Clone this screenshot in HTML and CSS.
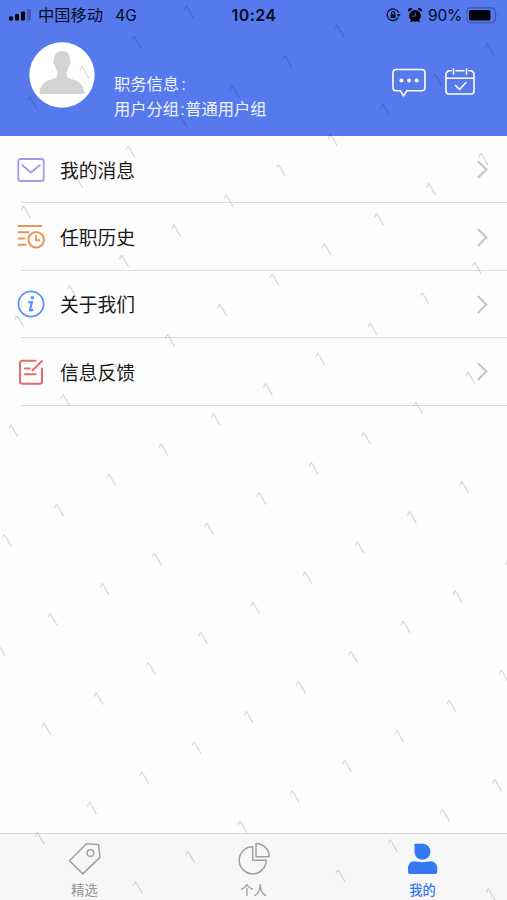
FILE: index.html
```html
<!DOCTYPE html>
<html lang="zh-CN">
<head>
<meta charset="utf-8">
<meta name="viewport" content="width=device-width">
<title>我的</title>
<link rel="stylesheet" href="styles.css">
</head>
<body>
<div class="app">
  <header class="header">
    <div class="status">
      <div class="status-left">
        <svg class="signal" width="22" height="14" viewBox="0 0 22 14"><rect x="0" y="8.5" width="4" height="4" rx="1"/><rect x="6" y="6" width="4" height="6.500" rx="1"/><rect x="12" y="3.500" width="4" height="9" rx="1"/><rect x="18.200" y="1" width="3.600" height="11.500" rx="1" opacity=".25"/></svg>
        <span class="carrier">中国移动</span><span class="network">4G</span>
      </div>
      <div class="clock">10:24</div>
      <div class="status-right">
        <svg width="15" height="14" viewBox="0 0 15 14" fill="none" stroke="#050b1e" stroke-width="1.200"><path d="M12.200 9.500A5.900 5.900 0 1 1 12.600 5"/><path d="M10.800 6h3.900l-1.900 3z" fill="#050b1e" stroke="none"/><rect x="4.600" y="6.300" width="5" height="3.900" rx=".5" fill="#050b1e" stroke="none"/><path d="M5.600 6.500V5a1.500 1.500 0 0 1 3 0v1.500"/></svg>
        <svg class="alarm" width="14" height="15" viewBox="0 0 14 15"><circle cx="7" cy="7.800" r="5.900"/><path d="M.6 3.800A2.300 2.300 0 0 1 4.500 1zM13.400 3.800A2.300 2.300 0 0 0 9.500 1zM2 14l2-3 1.500 1.300L3.500 14zM12 14l-2-3-1.500 1.300 2 1.700z"/><path d="M7.200 4.500v3.700H4.300" fill="none" stroke="#567aed" stroke-width=".9"/></svg>
        <span class="percent">90%</span>
        <svg class="battery" width="33" height="17" viewBox="0 0 33 17"><rect x=".8" y=".8" width="28.600" height="15" rx="4" fill="none" stroke="#3d58b4" stroke-width="1.200"/><rect x="3" y="3" width="21.500" height="10.600" rx="1.800" fill="#02040b"/><path d="M31 6q1.600 2.300 0 4.600z" fill="#3d58b4"/></svg>
      </div>
    </div>
    <div class="profile">
      <svg class="avatar" width="66" height="66" viewBox="0 0 66 66"><circle cx="33" cy="33" r="32.700" fill="#fff"/><path d="M33 9c5.500 0 8.300 3.300 8.100 9.500 1.200.4.700 3.600-.8 4.600-.6 3.500-2 5.500-2.800 6.800-.4 4.500 1.500 6 6.500 7.700 7.500 2.500 11 6 11.400 14.400H10.600C11 43.600 14.500 40.100 22 37.600c5-1.700 6.900-3.200 6.500-7.700-.8-1.300-2.200-3.300-2.800-6.800-1.500-1-2-4.200-.8-4.600C24.700 12.300 27.500 9 33 9z" fill="#d3d3d3"/></svg>
      <div class="info"><div>职务信息<span class="colon">:</span></div><div>用户分组<span class="colon tight">:</span>普通用户组</div></div>
      <div class="actions">
        <svg width="34" height="30" viewBox="0 0 34 30" fill="none" stroke="#fff" stroke-width="1.600" stroke-linejoin="round"><path d="M4 1.500h26a3 3 0 0 1 3 3v15.300a3 3 0 0 1-3 3H15l-3.500 5-3-5H4a3 3 0 0 1-3-3V4.500a3 3 0 0 1 3-3z"/><g fill="#fff" stroke="none"><circle cx="9.400" cy="12.500" r="2"/><circle cx="17" cy="12.500" r="2"/><circle cx="24.600" cy="12.500" r="2"/></g></svg>
        <svg width="30" height="30" viewBox="0 0 30 30" fill="none" stroke="#fff" stroke-width="1.600" stroke-linecap="round" stroke-linejoin="round"><path d="M6 2.800H4.500a3.500 3.500 0 0 0-3.500 3.500V23a3 3 0 0 0 3 3h22a3 3 0 0 0 3-3V6.300a3.500 3.500 0 0 0-3.500-3.500H24M11 2.800h8M1 10.300h28M8.500 1v5M21.500 1v5M10.500 17.500l4 4 6.500-7"/></svg>
      </div>
    </div>
  </header>

  <nav class="menu">
    <a class="row"><svg class="icon" viewBox="0 0 28 28" fill="none" stroke="#a796f1" stroke-width="1.800" stroke-linecap="round" stroke-linejoin="round"><rect x="1.300" y="3" width="25.400" height="22" rx="2"/><path d="M5.300 9.300l8.700 7.200 8.700-7.200"/></svg><span>我的消息</span><i class="arrow"></i></a>
    <a class="row"><svg class="icon" viewBox="0 0 28 28" fill="none" stroke="#e99554" stroke-width="2"><path d="M.8 3H25M.8 9.200h11.500M.8 15.500h7.400M.8 21.800h8.500"/><circle cx="19.200" cy="16.800" r="7.800"/><path d="M19 12.300v5h4"/></svg><span>任职历史</span><i class="arrow"></i></a>
    <a class="row"><svg class="icon" viewBox="0 0 28 28" fill="none" stroke="#5d94ef" stroke-width="1.800"><circle cx="14" cy="14" r="12.600"/><circle cx="15.300" cy="7.700" r="1.800" fill="#5d94ef" stroke="none"/><path d="M11.300 12.200h3.600l-1.800 7.300q-.2 1.200 1 .9l2-.9" stroke-width="2.200"/></svg><span>关于我们</span><i class="arrow"></i></a>
    <a class="row"><svg class="icon" viewBox="0 0 28 28" fill="none" stroke="#e56a6a" stroke-width="2" stroke-linecap="round"><path d="M18.500 2.800H5.500a2.500 2.500 0 0 0-2.500 2.500v18a2.500 2.500 0 0 0 2.500 2.500h17a2.500 2.500 0 0 0 2.500-2.500V10.500M25 3l-9.500 9.200M7.800 10.500h5M7.800 16.300h11"/></svg><span>信息反馈</span><i class="arrow"></i></a>
  </nav>

  <footer class="tabs">
    <a class="tab"><svg width="34" height="34" viewBox="0 0 34 34" fill="none" stroke="#a0a0a0" stroke-width="1.500" stroke-linejoin="round"><path d="M18.400 1.800l12.200.8 1.300 12.800L14.800 31.900 1.500 18.700z"/><circle cx="22.400" cy="11" r="3.300"/></svg><span>精选</span></a>
    <a class="tab"><svg width="34" height="34" viewBox="0 0 34 34" fill="none" stroke="#a0a0a0" stroke-width="1.500" stroke-linejoin="round"><path d="M15.700 4.800A13.500 13.500 0 1 0 29.200 18.300H15.700z"/><path d="M19 1.500A13.200 13.200 0 0 1 32.200 14.700H19z"/></svg><span>个人</span></a>
    <a class="tab active"><svg width="34" height="34" viewBox="0 0 34 34" fill="#3478f2"><path d="M8.500 1.800H17a8 8 0 1 1-8.500 8z"/><path d="M8.500 19.300c3 0 4.500 1 8 1s5-1 8-1c4 0 6.800 3 6.800 7.500V30a2 2 0 0 1-2 2H4a2 2 0 0 1-2-2v-3.200c0-4.500 2.500-7.500 6.500-7.500z"/></svg><span>我的</span></a>
  </footer>
  <svg class="watermark" width="507" height="900" aria-hidden="true"></svg>
</div>
<script src="watermark.js"></script>
</body>
</html>
```

FILE: styles.css
```css
* { box-sizing: border-box; }
body {
  margin: 0;
  font-family: "Liberation Sans", "Noto Sans CJK SC", sans-serif;
  background: #fdfdfd;
}
.app {
  position: relative;
  width: 507px;
  height: 900px;
  display: flex;
  flex-direction: column;
  overflow: hidden;
}
.header { height: 135.500px; background: #567aed; color: #fff; }
.status {
  height: 30px;
  padding: 0 8px 0 9px;
  display: grid;
  grid-template-columns: 1fr auto 1fr;
  align-items: center;
  color: #050b1e;
  font-family: Inter, "Noto Sans CJK SC", sans-serif;
  font-size: 15.500px;
}
.status-left, .status-right { display: flex; align-items: center; }
.status-right { justify-content: flex-end; }
.carrier { margin-left: 7px; font-size: 16.300px; line-height: 30px; }
.network { margin-left: 12px; }
.clock { font-weight: 600; font-size: 16px; letter-spacing: .4px; }
.alarm { margin-left: 7px; }
.percent { margin-left: 6px; font-size: 15.500px; letter-spacing: -.2px; }
.battery { margin-left: 4px; }
.profile { display: flex; padding: 12px 32px 0 29px; }
.avatar { flex: none; }
.info { margin: 30px 0 0 19px; font-size: 16.300px; line-height: 24.500px; white-space: nowrap; color: #eef2ff; }
.colon { display: inline-block; width: 6px; padding-left: 2px; }
.tight { padding-left: 1px; }
.actions { display: flex; gap: 19px; margin: 26px 0 0 auto; }

.menu { flex: 1; padding-top: .5px; }
.row {
  height: 67.400px;
  margin-left: 21px;
  padding-right: 19px;
  display: flex;
  align-items: center;
  border-bottom: 1.500px solid #dedede;
  color: #191919;
  font-size: 18.800px;
}
.icon { width: 28px; height: 28px; margin: 1px 15px 0 -4px; }
.arrow {
  width: 13px;
  height: 13px;
  margin: 1px 1px 0 auto;
  border: solid #c5c5c7;
  border-width: 2px 2px 0 0;
  transform: translateX(-2px) rotate(45deg);
}

.tabs {
  height: 67px;
  display: grid;
  grid-template-columns: repeat(3, 1fr);
  border-top: 1.500px solid #dadada;
  background: #f7f7f7;
}
.tab {
  display: flex;
  flex-direction: column;
  align-items: center;
  padding-top: 8px;
  color: #929292;
  font-size: 13.300px;
  line-height: 20px;
}
.tab span { margin-top: 5px; }
.active { color: #3478f2; font-weight: 500; }

.watermark { position: absolute; inset: 0; pointer-events: none; }
.watermark text {
  font: 300 19.500px Inter, sans-serif;
  fill: #000;
  fill-opacity: .16;
  text-anchor: middle;
}
```

FILE: watermark.js
```javascript
// Tile the watermark character on a slanted lattice over the whole screen.
const layer = document.querySelector('.watermark');
for (let row = -5; row <= 9; row++) {
  for (let col = -4; col <= 14; col++) {
    const x = 13 + 52.25 * col - 6.4 * row;
    const y = 431.5 - 30.2 * col + 109.4 * row;
    if (x < -1 || x > 510 || y < 10 || y > 900) continue;
    const mark = document.createElementNS('http://www.w3.org/2000/svg', 'text');
    mark.setAttribute('transform', `translate(${x} ${y}) rotate(-30)`);
    mark.setAttribute('y', '7');
    mark.textContent = '1';
    layer.append(mark);
  }
}
```
